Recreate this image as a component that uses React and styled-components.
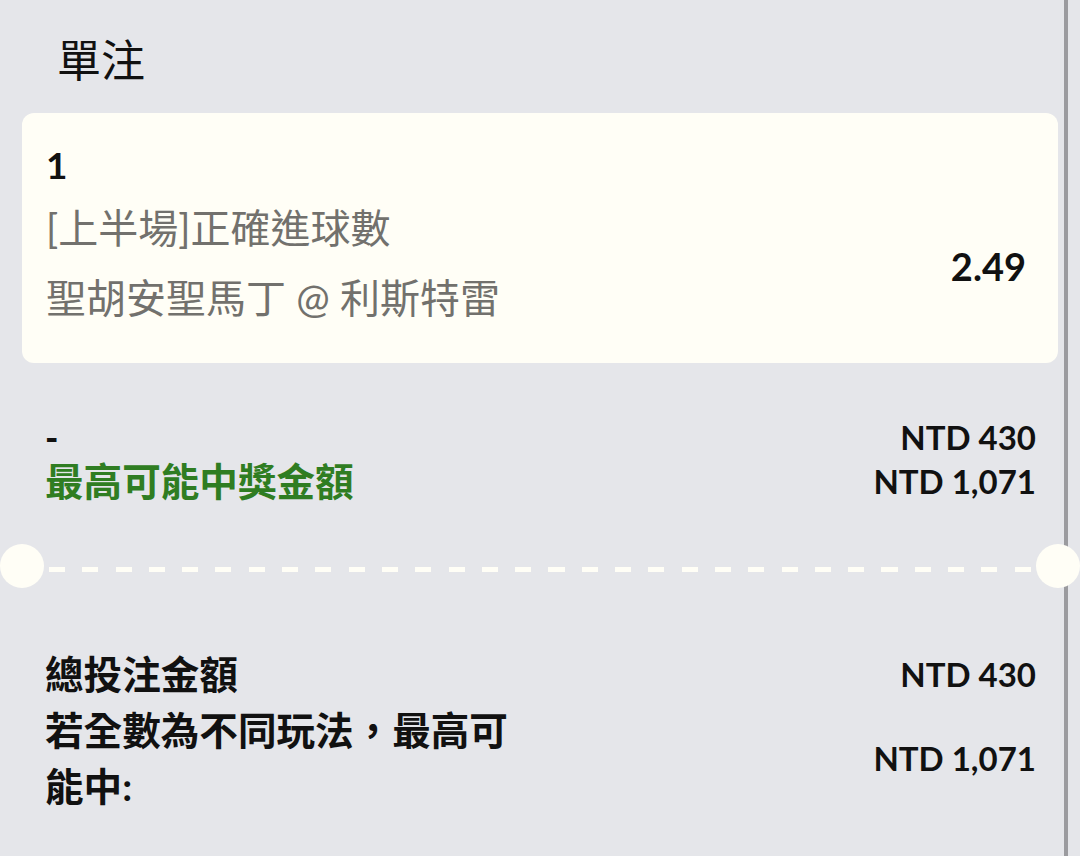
import React from "react";
import styled, { createGlobalStyle } from "styled-components";

const GlobalStyle = createGlobalStyle`
  html, body {
    margin: 0;
    padding: 0;
    background: #e5e6ea;
    overflow: hidden;
  }
  body {
    font-family: 'Lato', 'Noto Sans CJK TC', sans-serif;
    color: #111;
  }
`;

const Page = styled.div`
  width: 1080px;
  height: 856px;
  display: flex;
`;

const Panel = styled.div`
  position: relative;
  width: 1068px;
  box-sizing: border-box;
  border-right: 4px solid #9b9b9f;
  padding-top: 32px;
`;

const Title = styled.h1`
  margin: 0 0 25px;
  padding-left: 57px;
  font-size: 44px;
  font-weight: 400;
  line-height: 56px;
`;

const Card = styled.div`
  margin: 0 6px 0 22px;
  background: #fffef6;
  border-radius: 12px;
  padding: 32px 32px 30px 24px;
`;

const Index = styled.div`
  font-size: 37px;
  font-weight: 700;
  line-height: 40px;
  margin-bottom: 8px;
`;

const SelectionRow = styled.div`
  display: flex;
  align-items: center;
  justify-content: space-between;
`;

const Detail = styled.div`
  font-size: 40px;
  line-height: 70px;
  color: #72716d;
`;

const Odds = styled.div`
  font-size: 38px;
  font-weight: 700;
  padding-top: 6px;
`;

const Summary = styled.div`
  padding: 0 28px 0 45px;
  margin-top: ${(p) => p.$top}px;
`;

const Row = styled.div`
  display: flex;
  align-items: center;
  justify-content: space-between;
  line-height: ${(p) => p.$lh || 44}px;
`;

const Label = styled.div`
  font-size: ${(p) => p.$size || 38.6}px;
  font-weight: ${(p) => p.$weight || 700};
  color: ${(p) => (p.$green ? "#2f7d22" : "#111")};
  max-width: ${(p) => p.$max || "none"};
`;

const Amount = styled.div`
  font-size: 33px;
  font-weight: 700;
  white-space: nowrap;
`;

const Divider = styled.div`
  position: relative;
  height: 44px;
  margin-top: 41px;
  display: flex;
  align-items: center;
`;

const Dashes = styled.div`
  margin: 6px 33px 0 49px;
  flex: 1;
  height: 5px;
  background: repeating-linear-gradient(
    to right,
    #fffef6 0 16px,
    transparent 16px 33.3px
  );
`;

const Notch = styled.div`
  position: absolute;
  top: 0;
  left: ${(p) => p.$left}px;
  width: 44px;
  height: 44px;
  border-radius: 50%;
  background: #fffef6;
`;

export default function App() {
  return (
    <Page>
      <GlobalStyle />
      <Panel>
        <Title>單注</Title>
        <Card>
          <Index>1</Index>
          <SelectionRow>
            <div>
              <Detail>[上半場]正確進球數</Detail>
              <Detail>聖胡安聖馬丁 @ 利斯特雷</Detail>
            </div>
            <Odds>2.49</Odds>
          </SelectionRow>
        </Card>

        <Summary $top={52}>
          <Row>
            <Label $size={36} $weight={900}>-</Label>
            <Amount>NTD 430</Amount>
          </Row>
          <Row>
            <Label $green>最高可能中獎金額</Label>
            <Amount>NTD 1,071</Amount>
          </Row>
        </Summary>

        <Divider>
          <Notch $left={0} />
          <Dashes />
          <Notch $left={1036} />
        </Divider>

        <Summary $top={58}>
          <Row $lh={56}>
            <Label>總投注金額</Label>
            <Amount>NTD 430</Amount>
          </Row>
          <Row $lh={56}>
            <Label $max="500px">若全數為不同玩法，最高可能中:</Label>
            <Amount>NTD 1,071</Amount>
          </Row>
        </Summary>
      </Panel>
    </Page>
  );
}
